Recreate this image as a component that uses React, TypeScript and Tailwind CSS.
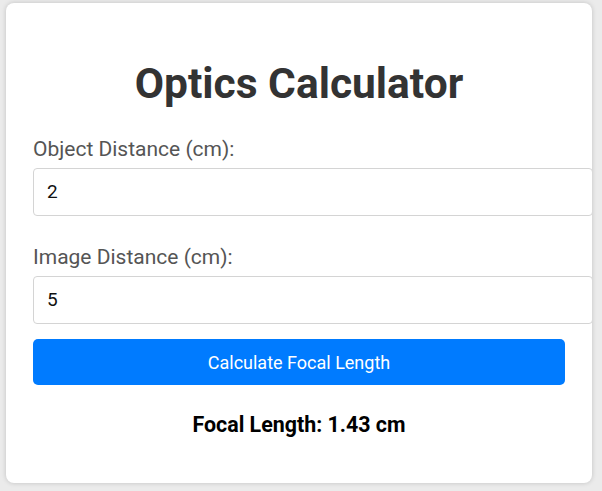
export default function App() {
  return (
    <div className="w-[602px] h-[491px] overflow-hidden bg-[#ebebeb] pt-[3px] pl-[6px]" style={{ fontFamily: "Roboto, 'Liberation Sans', sans-serif" }}>
      <div className="w-[586px] h-[480px] bg-white rounded-[8px] shadow-[0_0_5px_rgba(0,0,0,0.18)] overflow-hidden pt-[56px] px-[27px]">
        <h1 className="text-[42.5px] leading-[49px] font-bold text-[#333] text-center">Optics Calculator</h1>
        <div className="mt-[29px]">
          <label className="block text-[21px] leading-[24px] text-[#555] mb-[7px]">Object Distance (cm):</label>
          <div className="w-[560px] h-[48px] border border-[#d4d4d4] rounded-[4px] pl-[13px] flex items-center text-[19px] text-[#111]">2</div>
        </div>
        <div className="mt-[29px]">
          <label className="block text-[21px] leading-[24px] text-[#555] mb-[7px]">Image Distance (cm):</label>
          <div className="w-[560px] h-[48px] border border-[#d4d4d4] rounded-[4px] pl-[13px] flex items-center text-[19px] text-[#111]">5</div>
        </div>
        <button className="mt-[15px] w-full h-[46px] bg-[#007bff] rounded-[5px] text-white text-[18px] flex items-center justify-center">Calculate Focal Length</button>
        <p className="mt-[28px] text-center text-[21.4px] leading-[24px] font-bold text-black">Focal Length: 1.43 cm</p>
      </div>
    </div>
  );
}
